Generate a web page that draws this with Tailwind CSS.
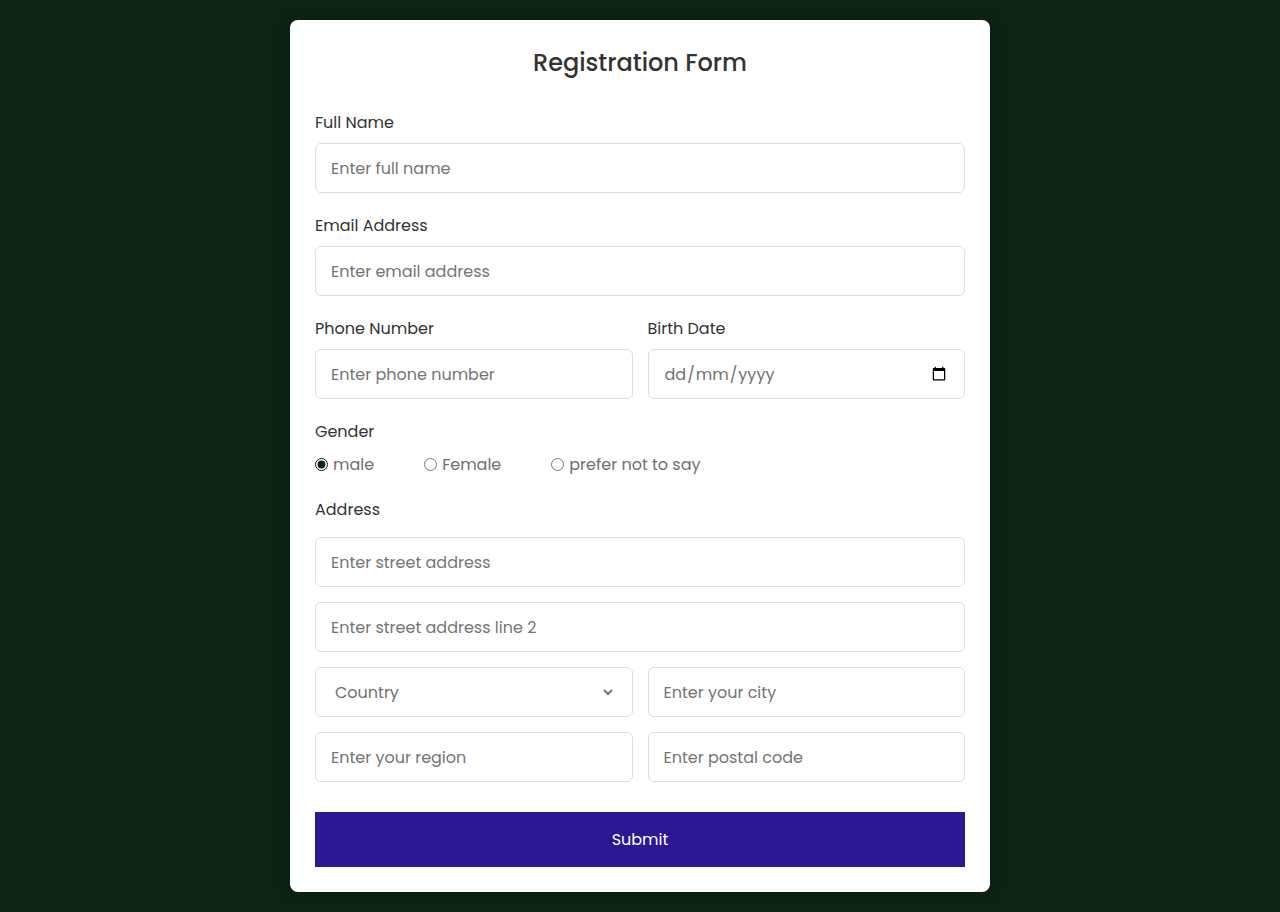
<!DOCTYPE html>
<html lang="en-GB">
<head>
<meta charset="utf-8">
<meta name="viewport" content="width=device-width, initial-scale=1">
<title>Registration Form</title>
<script src="https://cdn.jsdelivr.net/npm/@tailwindcss/browser@4"></script>
</head>
<body class="flex min-h-screen items-center justify-center bg-[#0c2313] p-5 font-[Poppins,Lato,sans-serif] text-base text-[#333]">
<section class="w-full max-w-[700px] rounded-lg bg-white p-[25px] shadow-[0_0_15px_rgba(0,0,0,0.1)]">
  <h1 class="text-center text-2xl leading-[35px] font-medium">Registration Form</h1>
  <form class="mt-[30px] leading-[25px]">
    <div>
      <label for="name" class="block">Full Name</label>
      <input id="name" type="text" placeholder="Enter full name" class="mt-2 block h-[50px] w-full rounded-md border border-[#ddd] px-[15px] text-[#707070] placeholder:text-[#757575]">
    </div>
    <div class="mt-5">
      <label for="email" class="block">Email Address</label>
      <input id="email" type="email" placeholder="Enter email address" class="mt-2 block h-[50px] w-full rounded-md border border-[#ddd] px-[15px] text-[#707070] placeholder:text-[#757575]">
    </div>
    <div class="mt-5 grid grid-cols-2 gap-x-[15px]">
      <div>
        <label for="phone" class="block">Phone Number</label>
        <input id="phone" type="tel" placeholder="Enter phone number" class="mt-2 block h-[50px] w-full rounded-md border border-[#ddd] px-[15px] text-[#707070] placeholder:text-[#757575]">
      </div>
      <div>
        <label for="birth" class="block">Birth Date</label>
        <!-- The grid puts the day before the month in every browser locale; the slashes fill columns 2 and 4. -->
        <input id="birth" type="date" class="mt-2 block h-[50px] w-full rounded-md border border-[#ddd] px-[15px] text-[#707070] [&::-webkit-datetime-edit-fields-wrapper]:inline-grid [&::-webkit-datetime-edit-fields-wrapper]:grid-flow-col [&::-webkit-datetime-edit-fields-wrapper]:grid-rows-1 [&::-webkit-datetime-edit-day-field]:col-start-1 [&::-webkit-datetime-edit-day-field]:row-start-1 [&::-webkit-datetime-edit-month-field]:col-start-3 [&::-webkit-datetime-edit-month-field]:row-start-1 [&::-webkit-datetime-edit-year-field]:col-start-5 [&::-webkit-datetime-edit-year-field]:row-start-1">
      </div>
    </div>
    <fieldset class="mt-5">
      <legend>Gender</legend>
      <div class="mt-2 flex flex-wrap gap-x-[50px] text-[#707070]">
        <label class="flex items-center gap-[5px]"><input type="radio" name="gender" checked class="size-[13px] accent-[#0c2313]">male</label>
        <label class="flex items-center gap-[5px]"><input type="radio" name="gender" class="size-[13px] accent-[#0c2313]">Female</label>
        <label class="flex items-center gap-[5px]"><input type="radio" name="gender" class="size-[13px] accent-[#0c2313]">prefer not to say</label>
      </div>
    </fieldset>
    <div class="mt-5">
      <label for="street" class="block">Address</label>
      <div class="mt-[15px] grid grid-cols-2 gap-[15px]">
        <input id="street" type="text" placeholder="Enter street address" class="col-span-2 h-[50px] w-full rounded-md border border-[#ddd] px-[15px] text-[#707070] placeholder:text-[#757575]">
        <input type="text" aria-label="Street address line 2" placeholder="Enter street address line 2" class="col-span-2 h-[50px] w-full rounded-md border border-[#ddd] px-[15px] text-[#707070] placeholder:text-[#757575]">
        <div class="h-[50px] rounded-md border border-[#ddd] pr-4 pl-[15px]">
          <select aria-label="Country" class="h-full w-full text-[#707070] outline-none">
            <option>Country</option>
          </select>
        </div>
        <input type="text" aria-label="City" placeholder="Enter your city" class="h-[50px] w-full rounded-md border border-[#ddd] px-[15px] text-[#707070] placeholder:text-[#757575]">
        <input type="text" aria-label="Region" placeholder="Enter your region" class="h-[50px] w-full rounded-md border border-[#ddd] px-[15px] text-[#707070] placeholder:text-[#757575]">
        <input type="text" aria-label="Postal code" placeholder="Enter postal code" class="h-[50px] w-full rounded-md border border-[#ddd] px-[15px] text-[#707070] placeholder:text-[#757575]">
      </div>
    </div>
    <button type="submit" class="mt-[30px] block h-[55px] w-full bg-[#2c1893] text-white">Submit</button>
  </form>
</section>
</body>
</html>
